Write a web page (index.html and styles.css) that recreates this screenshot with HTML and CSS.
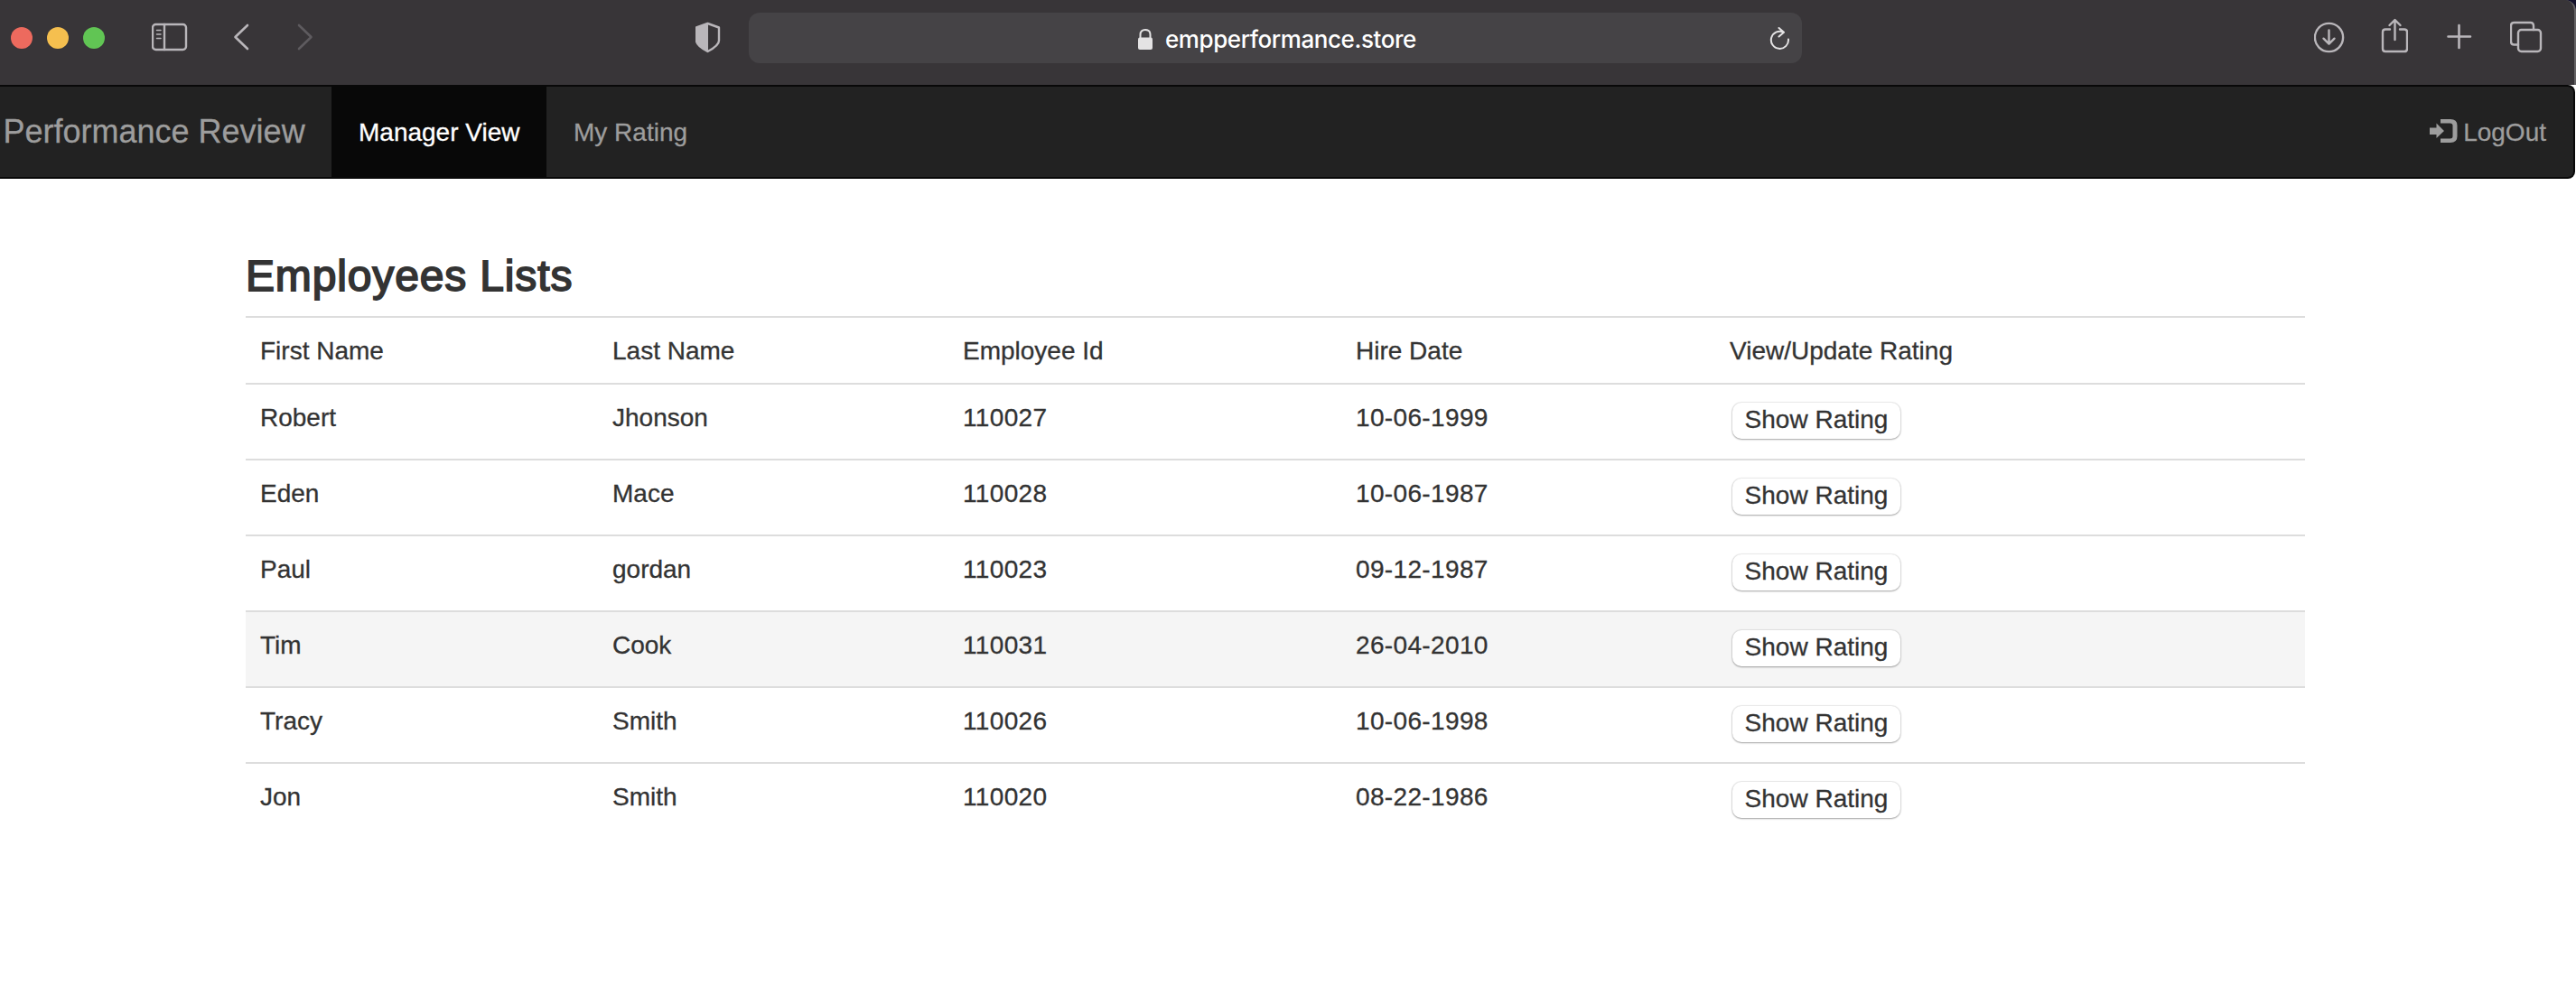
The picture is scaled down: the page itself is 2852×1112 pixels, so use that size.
FILE: index.html
```html
<!DOCTYPE html>
<html lang="en">
<head>
<meta charset="utf-8">
<title>Performance Review</title>
<link rel="stylesheet" href="styles.css">
</head>
<body>
<div class="window-top">
<header class="toolbar">
  <div class="lights"><i class="light red"></i><i class="light yellow"></i><i class="light green"></i></div>
  <svg class="icon sidebar" width="40" height="52" viewBox="168 16 40 52"><rect x="169" y="27" width="37" height="28" rx="3.5"/><path d="M182 27V55"/><path stroke-width="1.5" d="M173.500 33.500h4.500M173.500 38h4.500M173.500 42.500h4.500"/></svg>
  <svg class="icon back" width="18" height="52" viewBox="258 16 18 52"><path stroke-width="2.600" d="M274 28L260.500 41L274 54"/></svg>
  <svg class="icon forward" width="18" height="52" viewBox="329 16 18 52"><path stroke-width="2.600" d="M331 28L344.500 41L331 54"/></svg>
  <svg class="icon shield" width="28" height="52" viewBox="770 16 28 52"><path d="M783.500 26L796 30.500V45Q796 50.500 783.500 57Q771 50.500 771 45V30.500Z"/><path class="solid" d="M784 26L771 30.500V45Q771 50.500 784 57Z"/></svg>
  <div class="address">
    <svg class="lock" width="16" height="52" viewBox="1260 16 16 52"><rect class="lock-body" x="1260" y="41.500" width="16" height="13.500" rx="2"/><path d="M1262.500 43V38.500Q1262.500 33 1268 33T1273.500 38.500V43"/></svg>
    <span class="url">empperformance.store</span>
    <svg class="reload" width="24" height="52" viewBox="1959 16 24 52"><path d="M1980 43.500A9.600 9.600 0 1 1 1974.500 35.600M1969.500 31L1975 35.800L1969.500 40.500"/></svg>
  </div>
  <svg class="icon download" width="34" height="52" viewBox="2562 16 34 52"><circle cx="2578.500" cy="41.500" r="15.600"/><path d="M2578.500 33.500V48.500M2572.500 42.700L2578.500 48.700L2584.500 42.700"/></svg>
  <svg class="icon share" width="30" height="52" viewBox="2636 16 30 52"><path d="M2646 32.500H2641Q2638 32.500 2638 35.500V54Q2638 57 2641 57H2662Q2665 57 2665 54V35.500Q2665 32.500 2662 32.500H2657M2651.500 44V22.500M2645.500 28L2651.500 22L2657.500 28"/></svg>
  <svg class="icon plus" width="28" height="52" viewBox="2709 16 28 52"><path stroke-width="2.600" d="M2710.500 40.500H2735M2722.500 28V53"/></svg>
  <svg class="icon tabs" width="36" height="52" viewBox="2779 16 36 52"><rect x="2788" y="33" width="25" height="24" rx="3.500"/><path d="M2788 49.500H2783.500Q2780 49.500 2780 46V28.500Q2780 25 2783.500 25H2801.500Q2805 25 2805 28.500V33"/></svg>
</header>
</div>
<nav class="navbar">
  <a class="brand">Performance Review</a>
  <a class="nav-link active">Manager View</a>
  <a class="nav-link">My Rating</a>
  <a class="nav-link logout"><svg width="31" height="26" viewBox="0 0 31 26"><path d="M0 9.500H7.500V4.500L16 13L7.500 21V17H0Z"/><path d="M12 0H23Q30.500 0 30.500 7V19Q30.500 26 23 26H12V21.500H22.500Q25.500 21.500 25.500 19V7Q25.500 4.500 22.500 4.500H12Z"/></svg><span class="logout-text">LogOut</span></a>
</nav>
<main class="container">
  <h2 class="title">Employees Lists</h2>
  <table class="employees">
    <colgroup><col class="c1"><col class="c2"><col class="c3"><col class="c4"><col></colgroup>
    <tbody>
    <tr class="head"><td>First Name</td><td>Last Name</td><td>Employee Id</td><td>Hire Date</td><td>View/Update Rating</td></tr>
    <tr><td>Robert</td><td>Jhonson</td><td class="num">110027</td><td class="num">10-06-1999</td><td><button class="show">Show Rating</button></td></tr>
    <tr><td>Eden</td><td>Mace</td><td class="num">110028</td><td class="num">10-06-1987</td><td><button class="show">Show Rating</button></td></tr>
    <tr><td>Paul</td><td>gordan</td><td class="num">110023</td><td class="num">09-12-1987</td><td><button class="show">Show Rating</button></td></tr>
    <tr class="hover"><td>Tim</td><td>Cook</td><td class="num">110031</td><td class="num">26-04-2010</td><td><button class="show">Show Rating</button></td></tr>
    <tr><td>Tracy</td><td>Smith</td><td class="num">110026</td><td class="num">10-06-1998</td><td><button class="show">Show Rating</button></td></tr>
    <tr><td>Jon</td><td>Smith</td><td class="num">110020</td><td class="num">08-22-1986</td><td><button class="show">Show Rating</button></td></tr>
    </tbody>
  </table>
</main>
</body>
</html>
```
FILE: styles.css
```css
* { box-sizing: border-box; }
body {
  margin: 0;
  width: 2852px;
  height: 1112px;
  overflow: hidden;
  background: #fff;
  color: #333;
  font: 28px/40px "Liberation Sans", Arial, sans-serif;
  -webkit-text-stroke: .3px currentColor;
}
.window-top { background: #14122c; }
.toolbar {
  display: flex;
  align-items: center;
  width: 2852px;
  height: 94px;
  padding: 0 35px 10px 12px;
  background: #383538;
  border-right: 2px solid #646264;
  border-top-right-radius: 12px;
}
.toolbar svg { flex: none; }
.lights { display: flex; gap: 16px; }
.light { width: 24px; height: 24px; border-radius: 50%; }
.red { background: #ed6a5e; }
.yellow { background: #f5bf4f; }
.green { background: #61c554; }
.icon {
  fill: none;
  stroke: #b9b6ba;
  stroke-width: 2.4;
  stroke-linecap: round;
  stroke-linejoin: round;
}
.solid { fill: #b9b6ba; stroke: none; }
.sidebar { margin-left: 52px; }
.back { margin-left: 50px; }
.forward { margin-left: 53px; stroke: #5e5b5f; }
.shield { margin-left: 423px; }
.address {
  display: flex;
  flex: none;
  align-items: center;
  width: 1166px;
  height: 56px;
  margin-left: 31px;
  padding: 0 12px 0 431px;
  border-radius: 12px;
  background: #454346;
}
.lock { fill: none; stroke: #e4e3e4; stroke-width: 2; }
.lock-body { fill: #e4e3e4; stroke: none; }
.url {
  margin-left: 14px;
  padding-top: 3px;
  color: #fff;
  font: 500 26px/40px Inter, sans-serif;
  letter-spacing: -.42px;
  -webkit-text-stroke: 0;
}
.reload {
  margin-left: auto;
  fill: none;
  stroke: #e4e3e4;
  stroke-width: 2;
  stroke-linecap: round;
  stroke-linejoin: round;
}
.download { margin-left: auto; }
.share { margin-left: 40px; }
.plus { margin-left: 43px; }
.tabs { margin-left: 42px; }
.navbar {
  display: flex;
  width: 2851px;
  height: 104px;
  border: solid #080808;
  border-width: 2px 2px 2px 0;
  border-radius: 0 8px 8px 0;
  background: #222;
  color: #9d9d9d;
  white-space: nowrap;
}
.brand {
  width: 367px;
  padding: 30px 0 0 3.5px;
  font-size: 36px;
}
.nav-link { padding: 31px 30px 0; }
.active { width: 238px; background: #080808; color: #fff; }
.logout { display: flex; margin-left: auto; padding-right: 30px; }
.logout svg { margin: 5px 6px 0 0; fill: #9d9d9d; }
.container { width: 2280px; margin: 0 0 0 272px; }
.title {
  margin: 0;
  padding: 82px 0 18px;
  font-size: 48px;
  font-weight: 400;
  line-height: 52px;
  letter-spacing: .85px;
  -webkit-text-stroke: 1.8px #333;
}
.employees {
  width: 2280px;
  table-layout: fixed;
  border-collapse: separate;
  border-spacing: 0;
}
.c1 { width: 390px; }
.c2 { width: 388px; }
.c3 { width: 435px; }
.c4 { width: 414px; }
.employees td {
  height: 84px;
  padding: 17px 16px 15px;
  border-top: 2px solid #ddd;
  vertical-align: top;
}
.employees .head td { height: 74px; }
.employees .num { letter-spacing: .35px; }
.hover { background: #f5f5f5; }
.show {
  display: block;
  width: 186px;
  height: 40px;
  margin: 3px 0 0 3px;
  padding: 0 0 2px;
  border: 0;
  border-radius: 10px;
  background: #fff;
  box-shadow: 0 0 1px 1px rgba(0,0,0,.08), 0 1px 2px rgba(0,0,0,.3);
  color: #333;
  font: 28px/38px "Liberation Sans", Arial, sans-serif;
  -webkit-text-stroke: .3px #333;
}
```
